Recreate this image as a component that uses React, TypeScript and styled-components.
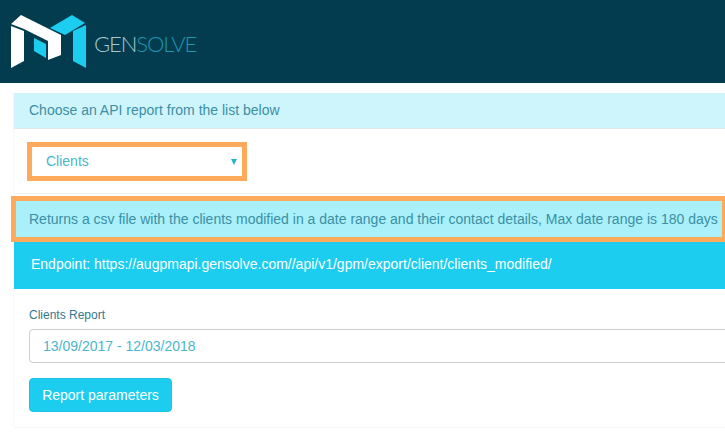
import styled, { createGlobalStyle } from "styled-components";

const GlobalStyle = createGlobalStyle`
  html, body {
    margin: 0;
    height: 100%;
    background: #fff;
    overflow: hidden;
  }
  body {
    font-family: "Liberation Sans", Arial, sans-serif;
    font-size: 14px;
  }
`;

const Header = styled.header`
  height: 83px;
  background: #033c4e;
  display: flex;
  align-items: center;
  padding-left: 11px;
  gap: 7px;
`;

const BrandName = styled.span`
  font-family: Lato, sans-serif;
  font-weight: 300;
  font-size: 22px;
  letter-spacing: -1.1px;
  color: #1f95ae;
  margin-top: 3px;
  b {
    font-weight: 300;
    color: #a6c8ce;
  }
`;

const Main = styled.main`
  width: 740px;
  padding: 10px 0 0 14px;
`;

const Panel = styled.section`
  height: 100px;
  box-shadow: 0 1px 0 #f4f4f4, -1px 0 0 #f8f8f8;
`;

const PanelHeading = styled.div`
  height: 36px;
  box-sizing: border-box;
  padding: 0 15px 2px;
  display: flex;
  align-items: center;
  background: #cff5fc;
  border-bottom: 1px solid #dfe8ea;
  color: #3c8fa4;
`;

const SelectRow = styled.div`
  padding: 13px;
`;

const HighlightedSelect = styled.div`
  width: 220px;
  height: 39px;
  box-sizing: border-box;
  border: 5px solid #fdaa5c;
  padding: 0 5px 1px 14px;
  display: flex;
  align-items: center;
  justify-content: space-between;
  color: #4ab6cd;
`;

const Caret = styled.span`
  width: 0;
  height: 0;
  margin-top: 1px;
  border-left: 3px solid transparent;
  border-right: 3px solid transparent;
  border-top: 6px solid #2fb3c9;
`;

const Note = styled.div`
  margin: 3px 0 0 -3px;
  width: 714px;
  height: 46px;
  box-sizing: border-box;
  border: 5px solid #fdaa5c;
  border-right-width: 3px;
  padding-left: 13px;
  background: #a9f0fa;
  color: #3c8fa4;
  display: flex;
  align-items: center;
  white-space: nowrap;
`;

const Endpoint = styled.div`
  height: 47px;
  box-sizing: border-box;
  padding: 0 17px 4px;
  display: flex;
  align-items: center;
  background: #1ccdef;
  color: #fff;
`;

const ReportPanel = styled.section`
  height: 138px;
  box-sizing: border-box;
  padding: 19px 15px 0;
  box-shadow: 0 1px 0 #f4f4f4, -1px 0 0 #f8f8f8;
`;

const FieldLabel = styled.label`
  display: block;
  font-size: 12px;
  line-height: 15px;
  color: #35788c;
  margin-bottom: 6px;
`;

const DateInput = styled.div`
  height: 34px;
  box-sizing: border-box;
  border: 1px solid #cccccc;
  border-radius: 4px;
  padding: 0 13px;
  display: flex;
  align-items: center;
  color: #4ab6cd;
`;

const ReportButton = styled.button`
  display: block;
  margin-top: 15px;
  width: 143px;
  height: 34px;
  padding: 0;
  border: 1px solid #1bc4e4;
  border-radius: 4px;
  background: #1ccdef;
  color: #fff;
  font: inherit;
`;

function Logo() {
  return (
    <svg width="76" height="54" viewBox="11 17 76 54" aria-hidden="true">
      <polygon
        fill="#ffffff"
        points="11,26 21,17 61,37 61,57 48,62 48,43 24,31 11,26"
      />
      <polygon fill="#ffffff" points="11,28 24,33 24,63 11,70" />
      <polygon fill="#1ccdef" points="34,40 46,46 46,60 34,53" />
      <polygon fill="#1ccdef" points="50,30 72,17 85,25 65,37" />
      <polygon fill="#1ccdef" points="73,33 86,27 86,70 73,63" />
    </svg>
  );
}

export default function App() {
  return (
    <>
      <GlobalStyle />
      <Header>
        <Logo />
        <BrandName>
          <b>GEN</b>SOLVE
        </BrandName>
      </Header>
      <Main>
        <Panel>
          <PanelHeading>Choose an API report from the list below</PanelHeading>
          <SelectRow>
            <HighlightedSelect>
              Clients
              <Caret />
            </HighlightedSelect>
          </SelectRow>
        </Panel>
        <Note>
          Returns a csv file with the clients modified in a date range and their
          contact details, Max date range is 180 days
        </Note>
        <Endpoint>
          Endpoint: https://augpmapi.gensolve.com//api/v1/gpm/export/client/clients_modified/
        </Endpoint>
        <ReportPanel>
          <FieldLabel>Clients Report</FieldLabel>
          <DateInput>13/09/2017 - 12/03/2018</DateInput>
          <ReportButton>Report parameters</ReportButton>
        </ReportPanel>
      </Main>
    </>
  );
}
